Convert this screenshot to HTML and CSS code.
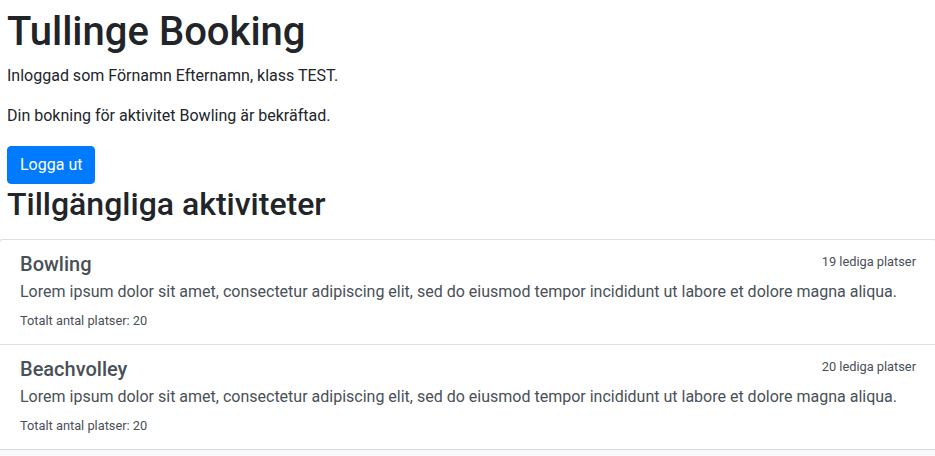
FILE: index.html
```html
<!DOCTYPE html>
<html lang="sv">
<head>
<meta charset="utf-8">
<title>Tullinge Booking</title>
<link rel="stylesheet" href="styles.css">
</head>
<body>
<div class="page">
  <header class="intro">
    <h1 class="title">Tullinge Booking</h1>
    <p class="text">Inloggad som Förnamn Efternamn, klass TEST.</p>
    <p class="text">Din bokning för aktivitet Bowling är bekräftad.</p>
    <form class="logout"><button type="button" class="btn">Logga ut</button></form>
    <h2 class="subtitle">Tillgängliga aktiviteter</h2>
  </header>
  <div class="list">
    <a class="item" href="#">
      <div class="item-head">
        <h5 class="item-title">Bowling</h5>
        <small class="free">19 lediga platser</small>
      </div>
      <p class="item-desc">Lorem ipsum dolor sit amet, consectetur adipiscing elit, sed do eiusmod tempor incididunt ut labore et dolore magna aliqua.</p>
      <small class="total">Totalt antal platser: 20</small>
    </a>
    <a class="item" href="#">
      <div class="item-head">
        <h5 class="item-title">Beachvolley</h5>
        <small class="free">20 lediga platser</small>
      </div>
      <p class="item-desc">Lorem ipsum dolor sit amet, consectetur adipiscing elit, sed do eiusmod tempor incididunt ut labore et dolore magna aliqua.</p>
      <small class="total">Totalt antal platser: 20</small>
    </a>
    <div class="item item-light"></div>
  </div>
</div>
</body>
</html>
```

FILE: styles.css
```css
* { box-sizing: border-box; }
html, body {
  margin: 0;
  padding: 0;
  overflow: hidden;
}
body {
  font-family: Roboto, "Liberation Sans", sans-serif;
  font-size: 16px;
  line-height: 1.5;
  color: #212529;
  background: #fff;
}
.page {
  overflow: hidden;
}
.intro {
  padding: 8px 7px 0 7px;
}
.title {
  margin: 0 0 8px 0;
  font-size: 40px;
  font-weight: 500;
  line-height: 1.2;
}
.text {
  margin: 0 0 16px 0;
}
.logout {
  margin: 0;
  padding-top: 2px;
}
.btn {
  display: inline-block;
  font-family: inherit;
  font-size: 16px;
  line-height: 1.5;
  font-weight: 400;
  color: #fff;
  background: #007bff;
  border: 1px solid #007bff;
  border-radius: 4px;
  padding: 6px 12px;
  cursor: pointer;
}
.subtitle {
  margin: 0 0 16px 0;
  padding-top: 1px;
  font-size: 32px;
  font-weight: 500;
  line-height: 1.2;
}
.list {
  display: flex;
  flex-direction: column;
  margin-left: -1px;
  margin-right: -2px;
}
.item {
  display: block;
  padding: 12px 20px;
  color: #495057;
  text-decoration: none;
  background: #fff;
  border: 1px solid rgba(0,0,0,.125);
  margin-bottom: -1px;
}
.item:first-child {
  border-top-left-radius: 4px;
  border-top-right-radius: 4px;
}
.item-light {
  background: #f8f9fa;
  height: 40px;
}
.item-head {
  display: flex;
  justify-content: space-between;
}
.item-title {
  margin: 0 0 4px 0;
  font-size: 20px;
  font-weight: 500;
  line-height: 1.2;
}
.free {
  font-size: 12.8px;
}
.item-desc {
  margin: 0 0 4px 0;
}
.total {
  font-size: 12.8px;
}
```
